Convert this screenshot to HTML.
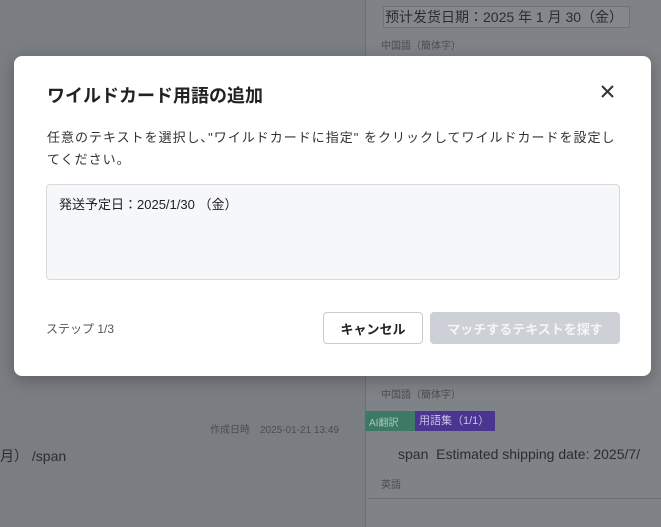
<!DOCTYPE html>
<html><head><meta charset="utf-8"><style>
body{margin:0;width:661px;height:527px;overflow:hidden;background:#7a7d82;font-family:"Liberation Sans","Noto Sans CJK JP",sans-serif;position:relative}
.abs{position:absolute}
.rp{left:365px;top:0;width:296px;height:527px;background:#7f8287;border-left:1px solid #6a6d72}
.modal{left:14px;top:56px;width:637px;height:320px;background:#fff;border-radius:8px;box-shadow:0 4px 16px rgba(0,0,0,.25)}
.title{left:33px;top:26px;font-size:18px;font-weight:bold;color:#222}
.x{left:587px;top:29px}
.desc{left:33px;top:71px;width:600px;font-size:13px;letter-spacing:1px;line-height:22px;color:#333;white-space:nowrap}
.box{left:32px;top:128px;width:572px;height:94px;background:#f6f7f9;border:1px solid #d6d9de;border-radius:4px}
.box span{position:absolute;left:12px;top:9px;font-size:13px;color:#222}
.step{left:32px;top:264px;font-size:12px;color:#555}
.btn{top:256px;height:30px;border-radius:4px;font-size:13px;font-weight:bold;display:flex;align-items:center;justify-content:center}
.c{left:309px;width:98px;border:1px solid #ccc;color:#222}
.m{left:416px;width:190px;height:32px;background:#cdd0d6;color:#f4f5f7}
.g{color:#4a4d52;font-size:13px}
</style></head><body>
<div class="abs rp"></div>
<div class="abs" style="left:383px;top:6px;width:245px;height:20px;border:1px solid #6f7277;background:#84878c"></div>
<div class="abs g" style="left:385px;top:7px;font-size:14px;color:#2b2d31">预计发货日期：2025 年 1 月 30（金）</div>
<div class="abs g" style="left:381px;top:37px;font-size:10px">中国語（簡体字）</div>
<div class="abs g" style="left:381px;top:386px;font-size:10px">中国語（簡体字）</div>
<div class="abs g" style="left:210px;top:421px;font-size:10px">作成日時　2025-01-21 13:49</div>
<div class="abs" style="left:365px;top:411px;width:50px;height:20px;background:#3d7a66"></div>
<div class="abs" style="left:415px;top:411px;width:80px;height:20px;background:#4a3590;color:#c8c0e6;font-size:11px;line-height:20px;padding-left:4px;box-sizing:border-box">用語集（1/1）</div>
<div class="abs" style="left:369px;top:414px;font-size:10px;color:#a7c6bb">AI翻訳</div>
<div class="abs g" style="left:0;top:446px;font-size:14px;color:#2b2d31">月）&nbsp;/span</div>
<div class="abs g" style="left:398px;top:446px;font-size:14px;color:#2b2d31">span&nbsp; Estimated shipping date: 2025/7/</div>
<div class="abs g" style="left:381px;top:476px;font-size:10px">英語</div>
<div class="abs" style="left:368px;top:498px;width:293px;border-top:1px solid #6a6d72"></div>
<div class="abs modal">
<div class="abs title">ワイルドカード用語の追加</div>
<svg class="abs x" width="13" height="13" viewBox="0 0 13 13"><path d="M1 1L12 12M12 1L1 12" stroke="#333" stroke-width="2"/></svg>
<div class="abs desc">任意のテキストを選択し､"ワイルドカードに指定" をクリックしてワイルドカードを設定し<br>てください。</div>
<div class="abs box"><span>発送予定日：2025/1/30 （金）</span></div>
<div class="abs step">ステップ 1/3</div>
<div class="abs btn c">キャンセル</div>
<div class="abs btn m">マッチするテキストを探す</div>
</div>
</body></html>
